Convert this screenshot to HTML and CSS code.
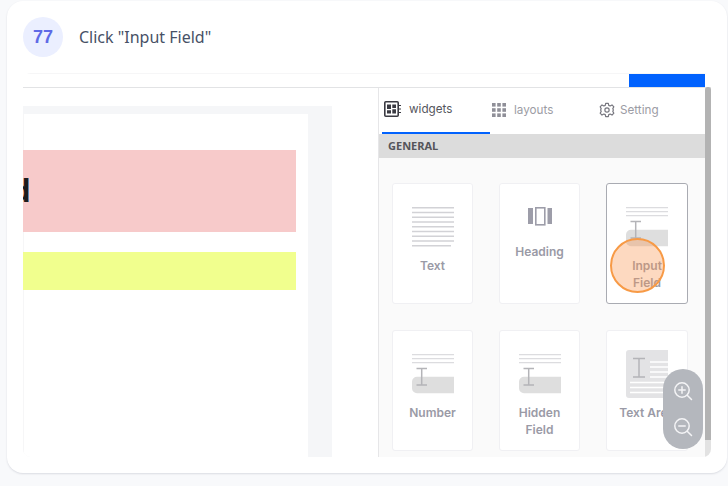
FILE: index.html
```html
<!DOCTYPE html>
<html>
<head>
    <title>Step 77</title>
    <link rel="stylesheet" href="styles.css">
</head>
<body>
    <svg class="icon-defs" width="0" height="0">
        <symbol id="field-icon" viewBox="0 0 42 42">
            <path d="M0 .7H42M0 4.7H42M0 8.7H42" stroke="#dcdcdf" stroke-width="1.3" fill="none"/>
            <path d="M5 22.7H42V39.3H5a5 5 0 0 1-5-5V27.7a5 5 0 0 1 5-5z" fill="#dedede"/>
            <path d="M4.5 14.5H15M9.7 14.5V31M4.5 31H15" stroke="#b4b4b8" stroke-width="1.5" fill="none"/>
        </symbol>
    </svg>

    <div class="page">
        <div class="card">
            <div class="step-head">
                <div class="step-num">77</div>
                <div class="step-title">Click "Input Field"</div>
            </div>

            <div class="frame">
                <div class="topbar">
                    <div class="save-btn"></div>
                </div>
                <div class="app">
                    <div class="canvas">
                        <div class="sheet">
                            <div class="sheet-inner">
                                <div class="band-pink"><span class="clipped-text">d</span></div>
                                <div class="band-yellow"></div>
                            </div>
                        </div>
                    </div>

                    <div class="panel">
                        <div class="tabs">
                            <div class="tab tab-active">
                                <svg width="17" height="16" viewBox="0 0 17 16">
                                    <rect x=".8" y=".8" width="13.4" height="14.4" rx="1" fill="none" stroke="#3a3a42" stroke-width="1.6"/>
                                    <path d="M3 3.5H7V8H3zM8.3 3.5H12V7H8.3zM3 9.3H7V12.5H3zM8.3 8.3H12V12.5H8.3z" fill="#3a3a42"/>
                                    <path d="M15 4.5H17M15 8H17M15 11.5H17" stroke="#3a3a42" stroke-width="1.2"/>
                                </svg>
                                <span>widgets</span>
                            </div>
                            <div class="tab tab-layouts">
                                <svg width="14" height="14" viewBox="0 0 14 14" fill="#8f8f98">
                                    <rect width="3.6" height="3.6"/><rect x="5.2" width="3.6" height="3.6"/><rect x="10.4" width="3.6" height="3.6"/>
                                    <rect y="5.2" width="3.6" height="3.6"/><rect x="5.2" y="5.2" width="3.6" height="3.6"/><rect x="10.4" y="5.2" width="3.6" height="3.6"/>
                                    <rect y="10.4" width="3.6" height="3.6"/><rect x="5.2" y="10.4" width="3.6" height="3.6"/><rect x="10.4" y="10.4" width="3.6" height="3.6"/>
                                </svg>
                                <span>layouts</span>
                            </div>
                            <div class="tab tab-setting">
                                <svg width="16" height="16" viewBox="0 0 24 24" fill="none" stroke="#77777f" stroke-width="1.8" stroke-linejoin="round">
                                    <circle cx="12" cy="12" r="3.2"/>
                                    <path d="M10 2h4l.6 3 2.2 1 2.7-1.6 2.8 2.8L20.7 10l.6 1v2l-.6 1 1.6 2.8-2.8 2.8-2.7-1.6-2.2 1-.6 3h-4l-.6-3-2.2-1-2.7 1.6-2.8-2.8L3.3 14l-.6-1v-2l.6-1-1.6-2.8 2.8-2.8L7.2 6l2.2-1z"/>
                                </svg>
                                <span>Setting</span>
                            </div>
                        </div>
                        <div class="group-head">GENERAL</div>
                        <div class="widget-grid">
                            <div class="widget">
                                <svg class="widget-icon" viewBox="0 0 42 42">
                                    <path d="M0 .7H42M0 5.5H42M0 10.3H42M0 15H42M0 19.8H42M0 24.6H42M0 29.3H42M0 34H42M0 38.8H39" stroke="#d2d2d6" stroke-width="1.5" fill="none"/>
                                </svg>
                                <div class="widget-label">Text</div>
                            </div>
                            <div class="widget">
                                <svg class="widget-icon icon-heading" viewBox="0 0 42 28">
                                    <rect x="9" y="1" width="5" height="16" fill="#9d9da9"/>
                                    <rect x="16.8" y=".8" width="9" height="17" fill="none" stroke="#9d9da9" stroke-width="1.6"/>
                                    <rect x="28.5" y="1" width="4.5" height="16" fill="#9d9da9"/>
                                </svg>
                                <div class="widget-label">Heading</div>
                            </div>
                            <div class="widget widget-selected">
                                <svg class="widget-icon"><use href="#field-icon"/></svg>
                                <div class="widget-label">Input<br>Field</div>
                                <div class="click-dot"></div>
                            </div>
                            <div class="widget">
                                <svg class="widget-icon"><use href="#field-icon"/></svg>
                                <div class="widget-label">Number</div>
                            </div>
                            <div class="widget">
                                <svg class="widget-icon"><use href="#field-icon"/></svg>
                                <div class="widget-label">Hidden<br>Field</div>
                            </div>
                            <div class="widget">
                                <svg class="widget-icon icon-tall" viewBox="0 0 42 48">
                                    <path d="M3 0H42V48H3a3 3 0 0 1-3-3V3a3 3 0 0 1 3-3z" fill="#e3e3e5"/>
                                    <path d="M7 8.5H19M13 8.5V27M7 27H19" stroke="#b4b4b8" stroke-width="1.5" fill="none"/>
                                    <path d="M24 12H42M24 17H42M24 22H42M24 27H42M4 32.5H42M4 37.5H42M4 42.5H42" stroke="#fff" stroke-width="1.5" fill="none"/>
                                </svg>
                                <div class="widget-label">Text Area</div>
                            </div>
                        </div>
                    </div>

                    <div class="scrollbar">
                        <div class="scroll-thumb"></div>
                    </div>
                </div>

                <div class="zoom-pill">
                    <svg width="20" height="20" viewBox="0 0 20 20" fill="none" stroke="#f4f4f6" stroke-width="1.5" stroke-linecap="round">
                        <circle cx="9" cy="9" r="7.2"/>
                        <path d="M14.2 14.2L18.5 18.5M9 5.8V12.2M5.8 9H12.2"/>
                    </svg>
                    <svg width="20" height="20" viewBox="0 0 20 20" fill="none" stroke="#f4f4f6" stroke-width="1.5" stroke-linecap="round">
                        <circle cx="9" cy="9" r="7.2"/>
                        <path d="M14.2 14.2L18.5 18.5M5.8 9H12.2"/>
                    </svg>
                </div>
            </div>
        </div>
    </div>
</body>
</html>
```

FILE: styles.css
```css
* {
    box-sizing: border-box;
}
body {
    margin: 0;
    background-color: #f8f9fb;
    font-family: "Inter", sans-serif;
}
.icon-defs {
    display: block;
    height: 0;
}
.page {
    width: 728px;
    height: 486px;
    padding: 1px 1px 0 7px;
    overflow: hidden;
}
.card {
    height: 472px;
    padding: 16px;
    background-color: #fff;
    border-radius: 16px;
    box-shadow: 0 1px 2px rgba(40, 50, 80, 0.14);
}
.step-head {
    display: flex;
    align-items: center;
    gap: 16px;
    height: 40px;
}
.step-num {
    width: 40px;
    height: 40px;
    line-height: 40px;
    text-align: center;
    border-radius: 50%;
    background-color: #ebefff;
    color: #5f6ae6;
    font-family: "Liberation Sans", sans-serif;
    font-size: 18px;
    font-weight: bold;
}
.step-title {
    font-family: "Noto Sans", sans-serif;
    font-size: 16px;
    color: #475166;
}
.frame {
    position: relative;
    margin-top: 16px;
    height: 384px;
    display: flex;
    flex-direction: column;
    overflow: hidden;
    border-radius: 8px;
}
.topbar {
    flex: none;
    height: 15px;
    display: flex;
    justify-content: flex-end;
    padding-right: 6px;
    border-top: 1px solid #f6f6f7;
    border-bottom: 1px solid #e2e3e5;
}
.save-btn {
    width: 76px;
    height: 13px;
    background-color: #0162fe;
}
.app {
    flex: 1;
    display: flex;
    min-height: 0;
}
.canvas {
    flex: none;
    width: 355px;
    padding-top: 18px;
}
.sheet {
    width: 309px;
    height: 100%;
    padding: 8px 24px 0 0;
    background-color: #f5f6f8;
}
.sheet-inner {
    height: 100%;
    padding: 36px 12px 0 0;
    background-color: #fff;
    border-left: 1px solid #f6f6f7;
}
.band-pink {
    height: 82px;
    margin: 0 0 20px -1px;
    display: flex;
    align-items: center;
    overflow: hidden;
    background-color: #f7caca;
}
.clipped-text {
    margin-left: -12.5px;
    color: #1c1c1c;
    font-family: "Liberation Sans", sans-serif;
    font-size: 33px;
    font-weight: bold;
}
.band-yellow {
    height: 38px;
    margin-left: -1px;
    background-color: #f1ff8e;
}
.panel {
    flex: none;
    width: 327px;
    border-left: 1px solid #e6e6e8;
    background-color: #fafafa;
    overflow: hidden;
}
.tabs {
    height: 46px;
    display: flex;
    background-color: #fff;
    font-size: 11.7px;
}
.tab {
    height: 46px;
    display: flex;
    align-items: center;
    gap: 8px;
    padding: 0 0 3px 2px;
    color: #9c9ca4;
}
.tab-active {
    width: 108px;
    margin-left: 3px;
    color: #55555d;
    border-bottom: 2px solid #0162fe;
}
.tab-layouts {
    width: 107px;
}
.tab-setting {
    gap: 5px;
}
.group-head {
    height: 24px;
    line-height: 24px;
    padding-left: 9px;
    background-color: #dcdcdc;
    color: #55555a;
    font-family: "Open Sans", sans-serif;
    font-size: 11px;
    font-weight: 700;
}
.widget-grid {
    display: grid;
    grid-template-columns: 81px 81px 82px;
    grid-auto-rows: 121px;
    gap: 26px;
    padding: 25px 0 0 13px;
}
.widget {
    position: relative;
    display: flex;
    flex-direction: column;
    align-items: center;
    padding-top: 24px;
    background-color: #fff;
    border: 1px solid #f0f0f3;
    border-radius: 3px;
}
.widget-selected {
    border-color: #a9abb2;
}
.widget-icon {
    flex: none;
    width: 42px;
    height: 42px;
    margin-top: -1px;
    margin-bottom: 8px;
}
.icon-heading {
    height: 28px;
}
.icon-tall {
    height: 48px;
    margin-top: -5px;
    margin-bottom: 6px;
}
.widget-label {
    color: #9a9aa6;
    font-size: 12px;
    font-weight: 600;
    line-height: 17px;
    text-align: center;
    white-space: nowrap;
}
.click-dot {
    position: absolute;
    left: 3px;
    top: 54px;
    width: 55px;
    height: 55px;
    border-radius: 50%;
    border: 2px solid #f79a46;
    background-color: rgba(250, 150, 80, 0.36);
}
.scrollbar {
    flex: none;
    width: 6px;
    margin-top: -1px;
    background-color: #e2e2e2;
}
.scroll-thumb {
    height: 353px;
    background-color: #b3b3b3;
    border-radius: 3px 3px 0 0;
}
.zoom-pill {
    position: absolute;
    right: 8px;
    top: 296px;
    width: 40px;
    height: 80px;
    display: flex;
    flex-direction: column;
    align-items: center;
    justify-content: space-around;
    padding: 4px 0;
    border-radius: 20px;
    background-color: #b4b7bd;
}
```
